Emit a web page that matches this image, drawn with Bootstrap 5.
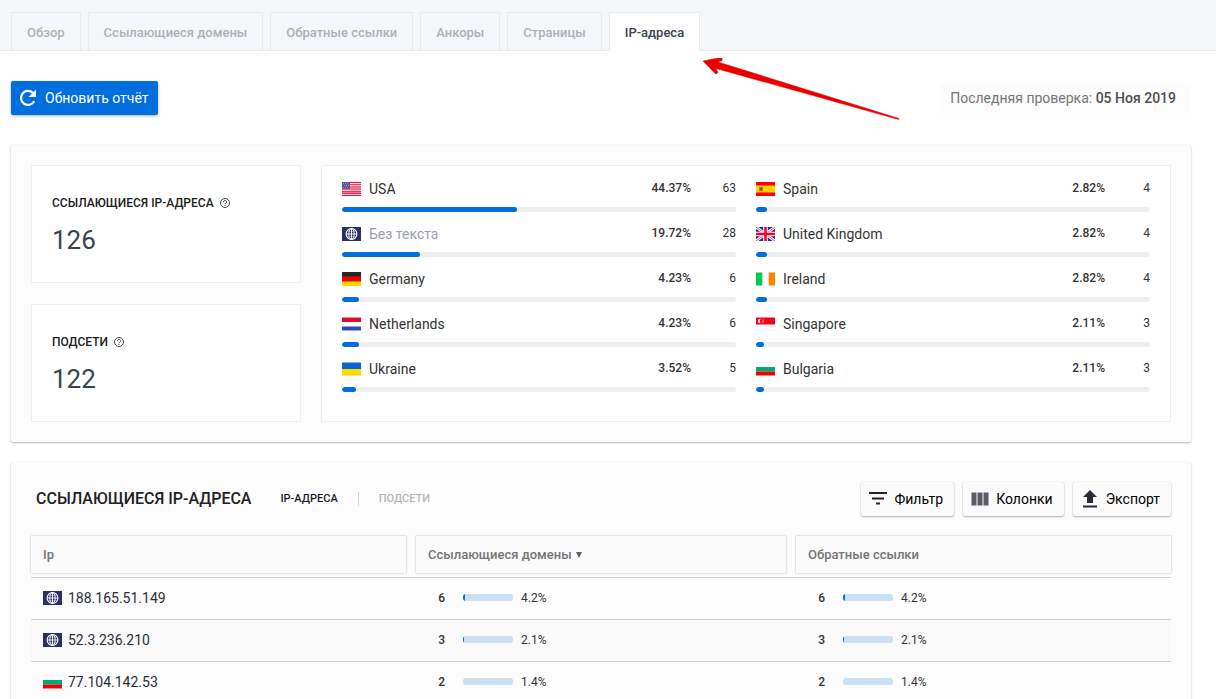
<!DOCTYPE html>
<html lang="ru">
<head>
<meta charset="utf-8">
<meta name="viewport" content="width=device-width, initial-scale=1">
<title>IP-адреса</title>
<link href="https://cdn.jsdelivr.net/npm/bootstrap@5.3.0/dist/css/bootstrap.min.css" rel="stylesheet">
<style>
  body { font-family: Roboto, "Noto Sans", sans-serif; font-size: 14px; line-height: 20px; color: #333; background: #fff; }

  .topbar { background: #f5f6fa; border-bottom: 1px solid #e9e9ec; padding: 12px 11px 0; }
  .topbar .nav-tabs { gap: 7px; border: 0; }
  .topbar .nav-tabs .nav-link { padding: 10px 15px 8px; margin-bottom: -1px; border: 1px solid #e9e9ec; border-bottom: 0; border-radius: 0; font-size: 13px; font-weight: 500; line-height: 20px; color: #adb0b8; }
  .topbar .nav-tabs .nav-link.active { background: #fff; color: #3b4251; }
  .pointer { position: absolute; left: 100%; top: 100%; margin-top: 8px; pointer-events: none; z-index: 2; }

  .page { padding: 30px 25px 0 11px; }
  .btn-refresh { background: #006edc; color: #fff; border: 0; border-radius: 2px; height: 34px; padding: 0 10px 0 7px; gap: 7px; font-size: 14px; box-shadow: 0 1px 3px rgba(0,0,0,.35); }
  .btn-refresh:hover { background: #0062c4; color: #fff; }
  .last-check { background: #fcfcfc; padding: 5px 15px 5px 10px; color: #757575; }
  .last-check strong { font-weight: 500; color: #4f4f4f; }

  .panel { background: #fcfcfc; border-radius: 2px; padding: 20px; box-shadow: 0 1px 2px rgba(0,0,0,.26), 0 0 1px rgba(0,0,0,.16); }
  .panel-summary { margin-top: 30px; }
  .panel-table { margin-top: 20px; }
  .summary { display: grid; grid-template-columns: 270px 1fr; gap: 20px; }
  .stats { gap: 21px; }
  .tile { background: #fff; border: 1px solid #eee; }
  .stat { padding: 27px 20px; height: 118px; }
  .stat h2 { font-size: 12px; line-height: 20px; font-weight: 500; color: #212121; margin: 0 0 12px; gap: 6px; }
  .stat output { display: block; font-size: 26px; line-height: 30px; color: #3b4251; }
  .geo { padding: 13px 20px; gap: 0 20px; display: grid; grid-template-columns: 1fr 1fr; align-content: start; }
  .geo ul { gap: 12px; }
  .geo-row { height: 33px; }
  .geo-row .flag { margin-right: 8px; }
  .geo-row .share { font-size: 12px; line-height: 18px; font-weight: 500; }
  .geo-row .total { font-size: 12px; line-height: 18px; width: 45px; text-align: right; }
  .geo-row .progress { height: 5px; margin-top: 8px; border-radius: 3px; background: #eee; }
  .progress-bar { background: #006edc; }
  .geo-row .progress-bar { border-radius: 3px; }
  .unnamed { color: #9aa0ab; }
  .flag { width: 19px; height: 14px; flex: none; }

  .panel-title { font-size: 16px; line-height: 20px; font-weight: 500; color: #212121; margin: 0 29px 0 5px; }
  .switch a { font-size: 11px; font-weight: 500; line-height: 14px; color: #b4b5b9; text-decoration: none; }
  .switch a.on { color: #1b1b2e; border-right: 1px solid #d5d5d5; padding-right: 20px; margin-right: 20px; }
  .tools { gap: 9px; }
  .btn-tool { background: #fafafa; color: #000; border: 0; border-radius: 2px; height: 34px; font-size: 14px; padding: 0 11px 0 7px; gap: 6px; box-shadow: 0 1px 2px rgba(0,0,0,.28), 0 0 1px rgba(0,0,0,.2); }

  .ip-table { table-layout: fixed; margin: 20px 0 0; color: #333; --bs-table-bg: transparent; }
  .ip-table th { padding: 0 0 4px; border: 0; }
  .ip-table .head { margin: 0 5px; height: 37px; line-height: 37px; padding: 0 12px; font-size: 13px; font-weight: 500; color: #757575; background: #fafafa; box-shadow: 0 0 2px rgba(0,0,0,.3); }
  .ip-table th:first-child .head { margin-left: 0; }
  .ip-table th:last-child .head { margin-right: 0; }
  .ip-table td { padding: 0 12px 2px; height: 42px; border-top: 1px solid #cfcfcf; border-bottom: 0; vertical-align: middle; }
  .ip-table tbody tr:nth-child(even) td { background: #f9f9f9; }
  .ip-table .ip { gap: 6px; color: #2b2e38; }
  .ip-table .num { font-size: 12px; font-weight: 500; width: 22px; text-align: right; margin-right: 18px; }
  .ip-table .progress { width: 50px; height: 7px; border-radius: 3px; background: #cbdff5; }
  .ip-table .pct { font-size: 12px; margin-left: 8px; }
  .sort { width: 6px; height: 6px; margin-left: 4px; vertical-align: 1px; }
</style>
</head>
<body>
<svg width="0" height="0" class="position-absolute" aria-hidden="true">
  <symbol id="f-us" viewBox="0 0 19 14"><rect width="19" height="14" fill="#f5a0b0"/><path d="M8 .5h11M8 2.7h11M8 4.8h11M0 7.2h19M0 9.3h19M0 11.4h19M0 13.4h19" stroke="#e0113c" stroke-width="1.1"/><path d="M8 1.6h11M8 3.8h11M0 8.2h19M0 12.4h19" stroke="#fde5ea" stroke-width=".9"/><rect width="8" height="7" fill="#5a5591"/><path d="M1 1.5h6M2 3.5h5M1 5.5h6" stroke="#a6a3c9" stroke-width=".8" stroke-dasharray="1 1"/></symbol>
  <symbol id="f-un" viewBox="0 0 19 14"><rect width="19" height="14" fill="#2b2f66"/><g fill="none" stroke="#fff"><circle cx="9.500" cy="7" r="5.400" stroke-width="1.100"/><ellipse cx="9.500" cy="7" rx="2.700" ry="5.400" stroke-width=".9"/><path d="M9.500 1.600v10.800M4.100 7h10.800" stroke-width=".9"/><path d="M5.500 4.300h8M5.500 9.700h8" stroke-width=".4"/></g></symbol>
  <symbol id="f-de" viewBox="0 0 19 14"><rect width="19" height="14" fill="#ffda00"/><path d="M0 0h19v9.500H0z" fill="#f00000"/><path d="M0 0h19v4.500H0z" fill="#262626"/></symbol>
  <symbol id="f-nl" viewBox="0 0 19 14"><rect width="19" height="14" fill="#fff"/><path d="M0 .5h19V5H0z" fill="#dc0a2d"/><path d="M0 9.500h19v4H0z" fill="#2a4fae"/></symbol>
  <symbol id="f-ua" viewBox="0 0 19 14"><path d="M0 .5h19V7H0z" fill="#0a63d6"/><path d="M0 7h19v6.500H0z" fill="#ffda00"/></symbol>
  <symbol id="f-es" viewBox="0 0 19 14"><rect width="19" height="14" fill="#f00"/><path d="M0 3.500h19v7H0z" fill="#ffd500"/><path d="M3 5h4v4H3z" fill="#c8741c"/><path d="M4 6h2v2H4z" fill="#a53c1f"/></symbol>
  <symbol id="f-gb" viewBox="0 0 19 14"><rect width="19" height="14" fill="#2b1fa5"/><path d="M0 0l19 14M19 0L0 14" stroke="#fff" stroke-width="2.800"/><path d="M0 0l19 14M19 0L0 14" stroke="#f0506a" stroke-width="1"/><path d="M9.500 0v14M0 7h19" stroke="#fff" stroke-width="4.600"/><path d="M9.500 0v14M0 7h19" stroke="#f0052d" stroke-width="2.600"/></symbol>
  <symbol id="f-ie" viewBox="0 0 19 14"><rect width="19" height="14" fill="#fff"/><path d="M0 .5h6.300v13H0z" fill="#00c853"/><path d="M12.700 .5H19v13h-6.300z" fill="#ff8200"/></symbol>
  <symbol id="f-sg" viewBox="0 0 19 14"><rect width="19" height="14" fill="#fff"/><path d="M0 13.500h19" stroke="#f2f2f2"/><path d="M0 .5h19V7.500H0z" fill="#f5001e"/><path d="M4.800 1.800a2.200 2.200 0 1 0 0 4.200a2.600 2.600 0 0 1 0-4.200" fill="#fff"/><path d="M5.800 3h1M7.500 3h1M6 5h2" stroke="#fcc" stroke-width=".8"/></symbol>
  <symbol id="f-bg" viewBox="0 0 19 14"><rect width="19" height="14" fill="#fff"/><path d="M0 .5h19" stroke="#f3f3f3"/><path d="M0 5h19v4.500H0z" fill="#00a878"/><path d="M0 9.500h19v4H0z" fill="#f00000"/></symbol>
  <symbol id="i-help" viewBox="0 0 10 10"><circle cx="5" cy="5" r="4.500" fill="none" stroke="#333" stroke-width=".9"/><path d="M3.500 4a1.500 1.500 0 1 1 2.300 1.200C5.200 5.600 5 5.700 5 6.300M5 7v.9" fill="none" stroke="#333" stroke-width=".9"/></symbol>
</svg>

<header class="topbar">
  <ul class="nav nav-tabs flex-nowrap">
    <li class="nav-item"><a class="nav-link" href="#">Обзор</a></li>
    <li class="nav-item"><a class="nav-link" href="#">Ссылающиеся домены</a></li>
    <li class="nav-item"><a class="nav-link" href="#">Обратные ссылки</a></li>
    <li class="nav-item"><a class="nav-link" href="#">Анкоры</a></li>
    <li class="nav-item"><a class="nav-link" href="#">Страницы</a></li>
    <li class="nav-item position-relative"><a class="nav-link active" aria-current="page" href="#">IP-адреса</a>
      <svg class="pointer" width="200" height="64" viewBox="-2 0 200 64" aria-hidden="true"><path d="M1 3L18.500-.5Q21 0 20 2.500L16 4L197 60.500L196.500 61.500L14 10.500L15.800 14.500Q15 16.500 13 15.500Z" fill="#e80000" stroke="#e80000" stroke-width=".5"/></svg>
    </li>
  </ul>
</header>

<main class="page">
  <div class="d-flex justify-content-between align-items-center">
    <button type="button" class="btn btn-refresh d-inline-flex align-items-center">
      <svg width="20" height="20" viewBox="0 0 20 20" aria-hidden="true"><path d="M16.200 13.200A7 7 0 1 1 15 5" fill="none" stroke="#fff" stroke-width="2.200"/><path d="M18 1.500V9h-7.500z" fill="#fff"/></svg>
      Обновить отчёт
    </button>
    <div class="last-check">Последняя проверка: <strong>05 Ноя 2019</strong></div>
  </div>

  <section class="panel panel-summary summary">
    <div class="stats d-flex flex-column">
      <div class="tile stat"><h2 class="d-flex align-items-center">ССЫЛАЮЩИЕСЯ IP-АДРЕСА <svg width="10" height="10" aria-hidden="true"><use href="#i-help"/></svg></h2><output>126</output></div>
      <div class="tile stat"><h2 class="d-flex align-items-center">ПОДСЕТИ <svg width="10" height="10" aria-hidden="true"><use href="#i-help"/></svg></h2><output>122</output></div>
    </div>
    <div class="tile geo">
      <ul class="list-unstyled d-flex flex-column m-0">
        <li class="geo-row"><div class="d-flex"><svg class="flag align-self-center" aria-hidden="true"><use href="#f-us"/></svg><span class="flex-grow-1">USA</span><span class="share">44.37%</span><span class="total">63</span></div><div class="progress"><div class="progress-bar" style="width:44.37%"></div></div></li>
        <li class="geo-row"><div class="d-flex"><svg class="flag align-self-center" aria-hidden="true"><use href="#f-un"/></svg><span class="flex-grow-1 unnamed">Без текста</span><span class="share">19.72%</span><span class="total">28</span></div><div class="progress"><div class="progress-bar" style="width:19.72%"></div></div></li>
        <li class="geo-row"><div class="d-flex"><svg class="flag align-self-center" aria-hidden="true"><use href="#f-de"/></svg><span class="flex-grow-1">Germany</span><span class="share">4.23%</span><span class="total">6</span></div><div class="progress"><div class="progress-bar" style="width:4.23%"></div></div></li>
        <li class="geo-row"><div class="d-flex"><svg class="flag align-self-center" aria-hidden="true"><use href="#f-nl"/></svg><span class="flex-grow-1">Netherlands</span><span class="share">4.23%</span><span class="total">6</span></div><div class="progress"><div class="progress-bar" style="width:4.23%"></div></div></li>
        <li class="geo-row"><div class="d-flex"><svg class="flag align-self-center" aria-hidden="true"><use href="#f-ua"/></svg><span class="flex-grow-1">Ukraine</span><span class="share">3.52%</span><span class="total">5</span></div><div class="progress"><div class="progress-bar" style="width:3.52%"></div></div></li>
      </ul>
      <ul class="list-unstyled d-flex flex-column m-0">
        <li class="geo-row"><div class="d-flex"><svg class="flag align-self-center" aria-hidden="true"><use href="#f-es"/></svg><span class="flex-grow-1">Spain</span><span class="share">2.82%</span><span class="total">4</span></div><div class="progress"><div class="progress-bar" style="width:2.82%"></div></div></li>
        <li class="geo-row"><div class="d-flex"><svg class="flag align-self-center" aria-hidden="true"><use href="#f-gb"/></svg><span class="flex-grow-1">United Kingdom</span><span class="share">2.82%</span><span class="total">4</span></div><div class="progress"><div class="progress-bar" style="width:2.82%"></div></div></li>
        <li class="geo-row"><div class="d-flex"><svg class="flag align-self-center" aria-hidden="true"><use href="#f-ie"/></svg><span class="flex-grow-1">Ireland</span><span class="share">2.82%</span><span class="total">4</span></div><div class="progress"><div class="progress-bar" style="width:2.82%"></div></div></li>
        <li class="geo-row"><div class="d-flex"><svg class="flag align-self-center" aria-hidden="true"><use href="#f-sg"/></svg><span class="flex-grow-1">Singapore</span><span class="share">2.11%</span><span class="total">3</span></div><div class="progress"><div class="progress-bar" style="width:2.11%"></div></div></li>
        <li class="geo-row"><div class="d-flex"><svg class="flag align-self-center" aria-hidden="true"><use href="#f-bg"/></svg><span class="flex-grow-1">Bulgaria</span><span class="share">2.11%</span><span class="total">3</span></div><div class="progress"><div class="progress-bar" style="width:2.11%"></div></div></li>
      </ul>
    </div>
  </section>

  <section class="panel panel-table">
    <div class="d-flex align-items-center">
      <h1 class="panel-title">ССЫЛАЮЩИЕСЯ IP-АДРЕСА</h1>
      <nav class="switch d-flex"><a class="on" href="#">IP-АДРЕСА</a><a href="#">ПОДСЕТИ</a></nav>
      <div class="tools d-flex ms-auto">
        <button type="button" class="btn btn-tool d-inline-flex align-items-center"><svg width="20" height="18" viewBox="0 0 20 18" aria-hidden="true"><path d="M1 3h18M4 8.500h12M8 13.500h4" stroke="#23232f" stroke-width="2"/></svg>Фильтр</button>
        <button type="button" class="btn btn-tool d-inline-flex align-items-center"><svg width="20" height="18" viewBox="0 0 20 18" aria-hidden="true"><path d="M1.500 2.500h5v13h-5zM7.500 2.500h5v13h-5zM13.500 2.500h5v13h-5z" fill="#5a5b66"/></svg>Колонки</button>
        <button type="button" class="btn btn-tool d-inline-flex align-items-center"><svg width="20" height="18" viewBox="0 0 20 18" aria-hidden="true"><path d="M10 0l7 7h-4v6H7V7H3zM3 15.500h14v2H3z" fill="#2a2a38"/></svg>Экспорт</button>
      </div>
    </div>
    <table class="table ip-table">
      <thead><tr>
        <th scope="col"><div class="head">Ip</div></th>
        <th scope="col" aria-sort="descending"><div class="head">Ссылающиеся домены<svg class="sort" viewBox="0 0 6 6" aria-hidden="true"><path d="M0 0h6L3 6z" fill="#5f6066"/></svg></div></th>
        <th scope="col"><div class="head">Обратные ссылки</div></th>
      </tr></thead>
      <tbody>
        <tr>
          <td><div class="ip d-flex align-items-center"><svg class="flag" aria-hidden="true"><use href="#f-un"/></svg>188.165.51.149</div></td>
          <td><div class="d-flex align-items-center"><span class="num">6</span><div class="progress"><div class="progress-bar" style="width:4.2%"></div></div><span class="pct">4.2%</span></div></td>
          <td><div class="d-flex align-items-center"><span class="num">6</span><div class="progress"><div class="progress-bar" style="width:4.2%"></div></div><span class="pct">4.2%</span></div></td>
        </tr>
        <tr>
          <td><div class="ip d-flex align-items-center"><svg class="flag" aria-hidden="true"><use href="#f-un"/></svg>52.3.236.210</div></td>
          <td><div class="d-flex align-items-center"><span class="num">3</span><div class="progress"><div class="progress-bar" style="width:2.1%"></div></div><span class="pct">2.1%</span></div></td>
          <td><div class="d-flex align-items-center"><span class="num">3</span><div class="progress"><div class="progress-bar" style="width:2.1%"></div></div><span class="pct">2.1%</span></div></td>
        </tr>
        <tr>
          <td><div class="ip d-flex align-items-center"><svg class="flag" aria-hidden="true"><use href="#f-bg"/></svg>77.104.142.53</div></td>
          <td><div class="d-flex align-items-center"><span class="num">2</span><div class="progress"></div><span class="pct">1.4%</span></div></td>
          <td><div class="d-flex align-items-center"><span class="num">2</span><div class="progress"></div><span class="pct">1.4%</span></div></td>
        </tr>
      </tbody>
    </table>
  </section>
</main>
<script src="https://cdn.jsdelivr.net/npm/bootstrap@5.3.0/dist/js/bootstrap.bundle.min.js"></script>
</body>
</html>
